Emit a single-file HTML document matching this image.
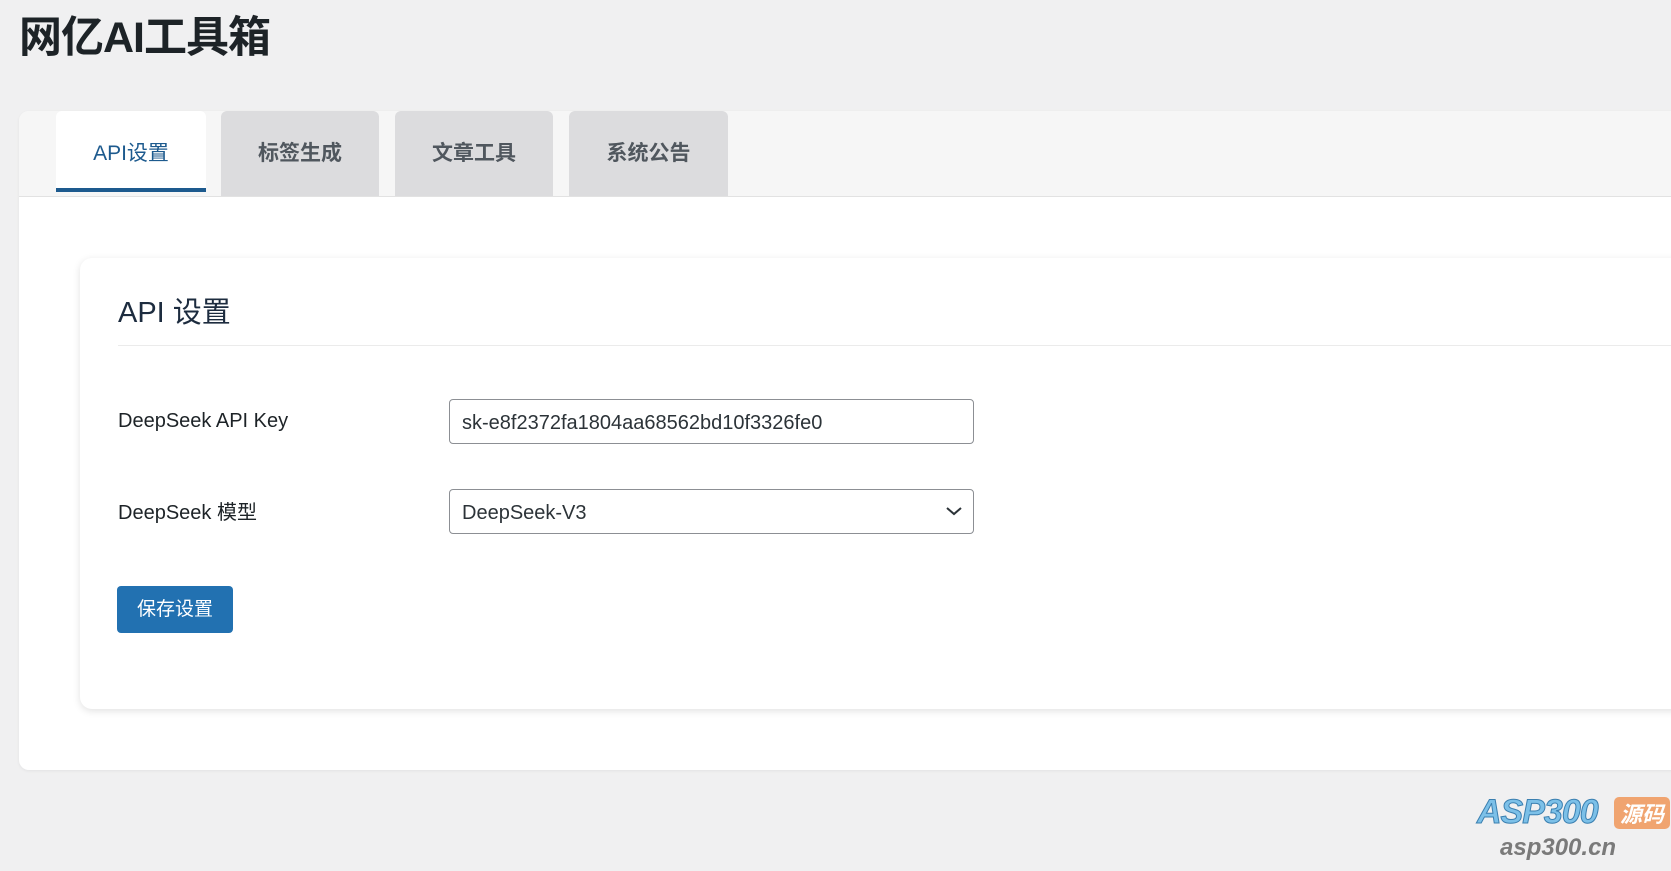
<!DOCTYPE html>
<html><head><meta charset="utf-8"><style>
*{box-sizing:border-box;margin:0;padding:0}
body{width:1671px;height:871px;background:#f0f0f1;font-family:"Liberation Sans","Noto Sans CJK SC",sans-serif;position:relative;overflow:hidden;color:#1d2327}
h1{position:absolute;left:19px;top:3px;font-size:43px;font-weight:bold;color:#1d2327;letter-spacing:-1px}
.wrap{position:absolute;left:19px;top:111px;width:1700px;height:659px;background:#fff;border-radius:10px;box-shadow:0 1px 3px rgba(0,0,0,.06);overflow:hidden}
.tabbar{position:absolute;left:0;top:0;right:0;height:86px;background:#f6f6f6;border-bottom:1px solid #e2e2e2}
.tab{position:absolute;top:0;height:85px;background:#dcdcde;border-radius:6px 6px 0 0;font-size:21px;font-weight:bold;color:#50575e;text-align:center;line-height:86px}
.tab.act{background:#fff;color:#1d5a8e;height:81px;line-height:86px;border-bottom:4px solid #1d5a8e;font-weight:normal}
.card{position:absolute;left:61px;top:147px;width:1700px;height:451px;background:#fff;border-radius:12px;box-shadow:0 2px 8px rgba(0,0,0,.12)}
.h2{position:absolute;left:38px;top:31px;font-size:29px;color:#1d2c3f}
.hr{position:absolute;left:38px;right:0;top:87px;border-top:1px solid #ebebeb}
.lbl{position:absolute;left:38px;font-size:20px;color:#1d2327}
.inp{position:absolute;left:369px;width:525px;height:45px;border:1px solid #8c8f94;border-radius:4px;font-size:20px;padding-left:12px;line-height:46px;color:#2c3338}
.btn{position:absolute;left:37px;top:328px;width:116px;height:47px;background:#2271b1;border-radius:4px;color:#fff;font-size:19px;line-height:47px;text-align:center}
</style></head><body>
<h1>网亿AI工具箱</h1>
<div class="wrap">
 <div class="tabbar"></div>
 <div class="tab act" style="left:37px;width:150px">API设置</div>
 <div class="tab" style="left:202px;width:158px">标签生成</div>
 <div class="tab" style="left:376px;width:158px">文章工具</div>
 <div class="tab" style="left:550px;width:159px">系统公告</div>
 <div class="card">
  <div class="h2">API 设置</div>
  <div class="hr"></div>
  <div class="lbl" style="top:152px">DeepSeek API Key</div>
  <div class="inp" style="top:141px">sk-e8f2372fa1804aa68562bd10f3326fe0</div>
  <div class="lbl" style="top:238px">DeepSeek 模型</div>
  <div class="inp" style="top:231px">DeepSeek-V3<svg style="position:absolute;right:10px;top:15px" width="18" height="12" viewBox="0 0 18 12"><path d="M2 3l7 6 7-6" fill="none" stroke="#2c3338" stroke-width="2"/></svg></div>
  <div class="btn">保存设置</div>
 </div>
</div>
<div style="position:absolute;left:1477px;top:793px;font:italic bold 34px 'Liberation Sans',sans-serif;color:#7cc0e8;-webkit-text-stroke:1px #3a7fb0;letter-spacing:-1px">ASP300</div>
<div style="position:absolute;left:1614px;top:797px;width:56px;height:32px;background:#f0a470;border-radius:5px;color:#fff;font:italic bold 22px 'Noto Sans CJK SC',sans-serif;text-align:center;line-height:32px">源码</div>
<div style="position:absolute;left:1500px;top:834px;font:italic bold 24px 'Liberation Sans',sans-serif;color:#7a7a7a">asp300.cn</div>
</body></html>
